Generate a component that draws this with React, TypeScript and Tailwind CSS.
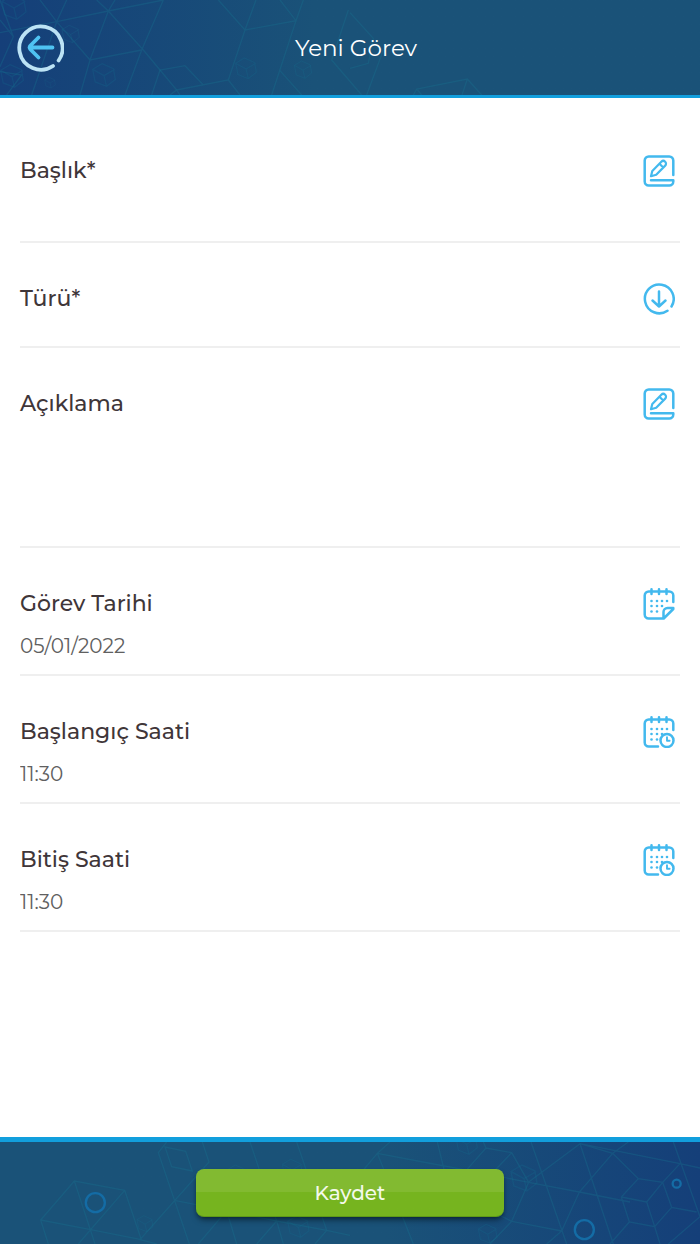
import { useState, type ReactNode } from "react";

const ink = {
  fill: "none",
  stroke: "currentColor",
  strokeWidth: 2.5,
  strokeLinecap: "round",
  strokeLinejoin: "round",
} as const;

function EditIcon() {
  return (
    <svg viewBox="0 0 32 32" className="size-8" aria-hidden="true" {...ink}>
      <path d="M30.300 20V5.500a4 4 0 0 0-4-4H5.700a4 4 0 0 0-4 4v21a4 4 0 0 0 4 4h20.600a4 4 0 0 0 4-4v-1.300H8" />
      <path d="m8 21.200 1.300-5.300 9-9.200a2.700 2.700 0 0 1 3.900 3.900l-9 9.200L8 21.200ZM16.500 8.800l3.700 3.700" strokeWidth="2.200" />
    </svg>
  );
}

function DownIcon() {
  return (
    <svg viewBox="0 0 32 32" className="size-8" aria-hidden="true" {...ink}>
      <path d="M28.500 23.500A14.400 14.400 0 1 0 24.500 27.700" />
      <path d="M16 8.500v15M9.500 17.500l6.500 6 6.500-6" />
    </svg>
  );
}

const dots: [number, number][] = [
  [8.5, 13], [14, 13], [19, 13], [24, 13],
  [8.5, 18], [14, 18], [19, 18],
  [8.5, 23.5], [14, 23.5],
];

function CalendarIcon({ clock = false }: { clock?: boolean }) {
  return (
    <svg viewBox="0 0 32 32" className="size-8" aria-hidden="true" {...ink}>
      <path d="M8.500 1.300v4.700M16 1.300v4.700M23.500 1.300v4.700" />
      {clock ? (
        <>
          <path d="M30.300 14V7.500a4 4 0 0 0-4-4H5.700a4 4 0 0 0-4 4v19a4 4 0 0 0 4 4H15" />
          <circle cx="24" cy="24.500" r="6.500" />
          <path d="M24 21.300v3.500h2.600" strokeWidth="1.900" />
        </>
      ) : (
        <path d="M30.300 14V7.500a4 4 0 0 0-4-4H5.700a4 4 0 0 0-4 4v19a4 4 0 0 0 4 4h15l9.600-9.500V20h-5.800a4 4 0 0 0-4 4v6.500" />
      )}
      <g fill="currentColor" stroke="none">
        {dots.map(([x, y]) => (
          <circle key={`${x}-${y}`} cx={x} cy={y} r="1.300" />
        ))}
      </g>
    </svg>
  );
}

function BackIcon() {
  return (
    <svg viewBox="0 0 48 48" className="size-12" aria-hidden="true" fill="none" strokeLinecap="round" strokeLinejoin="round">
      <path d="M42.600 36.500A21.600 21.600 0 1 0 37 42" stroke="#bce3f5" strokeWidth="3.800" />
      <path d="M36.500 23.500H13.500M22.500 13.500 14.500 21.500Q12.800 23.500 14.500 25.500L22.500 33.500" stroke="#4fc3f2" strokeWidth="3.800" />
    </svg>
  );
}

function Cube({ x, y, r }: { x: number; y: number; r: number }) {
  return (
    <path
      opacity="0.7"
      transform={`translate(${x} ${y}) scale(${r / 36})`}
      d="M-6-36 30-20 36 14 8 36-28 22-36-18ZM0 2-36-18M0 2 34-18M0 2 8 36"
    />
  );
}

function HeaderPattern() {
  return (
    <svg viewBox="0 0 2100 285" className="absolute bottom-0 left-0 w-175" aria-hidden="true" fill="none" stroke="#167191" strokeWidth="4" strokeOpacity="0.34">
      <path d="M0 98 170 65 325 33 490 0M120 0 170 65 270 180 425 150M200 0 170 65 95 285M290 0 325 33 430 150 530 270M345 0 325 33 270 180 240 285M490 0 425 150 375 285M0 60 40 110 0 200M0 215 65 225 20 285M40 110 0 0" />
      <path d="M455 285 480 210 555 197 610 255M655 0 735 90 888 62 840 0M768 0 735 90 685 240 530 270 510 285M530 270 540 285M910 0 888 62 815 285M685 240 720 285M840 212 905 285" />
      <path d="M1045 30 995 180 1085 285M1050 38 1120 115 1105 190 1050 205M1150 150 1100 285M1240 285 1250 267 1402 237 1445 285M1402 237 1386 285M1250 267 1265 285" />
      <Cube x={42} y={22} r={36} />
      <Cube x={212} y={102} r={26} />
      <Cube x={312} y={225} r={34} />
      <Cube x={36} y={228} r={34} />
      <Cube x={150} y={248} r={16} />
      <Cube x={738} y={205} r={31} />
      <Cube x={909} y={209} r={26} />
    </svg>
  );
}

function FooterPattern() {
  return (
    <svg viewBox="0 0 2100 306" className="absolute top-0 right-0 w-175" aria-hidden="true" fill="none">
      <g stroke="#167191" strokeWidth="4" strokeOpacity="0.34">
        <path d="M145 306 122 234 223 117 374 145 424 293 272 263 122 234M223 117 285 306M424 293 272 263 374 145M272 263 235 306M500 0 475 32 568 306M607 0 627 60 420 293 470 306M495 15 557 28 577 87 515 74ZM527 176 680 206 830 237 980 265 1050 280M750 0 830 237 770 306M890 0 980 265 945 306M680 206 595 306M680 206 710 306M830 237 850 306" />
        <path d="M1170 0 1132 34 1285 63 1440 92 1586 121 1738 150 1890 180M1132 34 1240 306M1312 0 1345 135M1132 34 1090 84M1390 95 1458 18 1535 32 1586 121 1535 238 1685 267 1640 306M1535 32 1480 90M1450 0 1458 18M1593 0 1700 306M1585 121 1740 5 1838 34 1738 150 1685 267M1740 5 2040 65 2100 78M1740 5 1840 306M1885 0 1838 34 1915 110 1988 121 2015 196 2090 210M2020 0 2100 224 2005 306M2040 65 1988 121 1940 180 1964 254 1888 240 1864 165 1915 110M1940 180 1864 165M1964 254 2015 196M1964 254 1980 306M1888 240 1830 306M1535 238 1470 306M1535 238 1480 210" />
        <Cube x={435} y={245} r={24} />
        <Cube x={710} y={94} r={25} />
        <Cube x={877} y={82} r={30} />
        <Cube x={895} y={254} r={32} />
        <Cube x={1400} y={5} r={32} />
        <Cube x={1572} y={108} r={39} />
        <Cube x={1463} y={275} r={28} />
      </g>
      <g stroke="#146ca5" strokeWidth="7">
        <circle cx="286" cy="182" r="28.500" />
        <circle cx="1753" cy="263" r="28.500" />
        <circle cx="2030" cy="125" r="12" />
      </g>
    </svg>
  );
}

type FieldProps = {
  id: string;
  label: string;
  icon: ReactNode;
  inline?: ReactNode;
  children?: ReactNode;
};

function Field({ id, label, icon, inline, children }: FieldProps) {
  return (
    <div className="border-b-2 border-[#efefef] pt-10 pb-3">
      <div className="flex h-8 items-center gap-4 pr-[5px]">
        <label htmlFor={id} className="text-[22px] leading-8 font-medium text-[#3f3639]">
          {label}
        </label>
        <div className="flex-1">{inline}</div>
        <button type="button" aria-label={label} className="text-[#43b9ee]">
          {icon}
        </button>
      </div>
      {children}
    </div>
  );
}

const valueClass =
  "mt-2.5 block h-8 w-full bg-transparent text-[20px] leading-8 text-[#606060] outline-none";

export default function App() {
  const [date, setDate] = useState("05/01/2022");
  const [start, setStart] = useState("11:30");
  const [end, setEnd] = useState("11:30");

  return (
    <div className="flex min-h-screen flex-col bg-white font-['Montserrat','Inter',sans-serif]">
      <header className="relative grid h-[98px] grid-cols-[1fr_auto_1fr] items-center overflow-hidden border-b-3 border-[#129fdd] bg-linear-to-r from-[#153f79] to-[#1a5278] to-45% pr-1 pl-4">
        <HeaderPattern />
        <button type="button" aria-label="Geri" className="relative justify-self-start">
          <BackIcon />
        </button>
        <h1 className="relative text-[23px] leading-8 text-white">Yeni Görev</h1>
      </header>

      <form className="flex flex-1 flex-col" onSubmit={(e) => e.preventDefault()}>
        <main className="flex-1 px-5 pt-[17px]">
          <Field id="title" label="Başlık*" icon={<EditIcon />}>
            <input id="title" type="text" className={valueClass} />
          </Field>
          <Field
            id="kind"
            label="Türü*"
            icon={<DownIcon />}
            inline={
              <select id="kind" className="block h-8 w-full appearance-none bg-transparent text-[20px] text-[#606060] outline-none">
                <option value=""></option>
              </select>
            }
          >
            <div className="h-[19px]" />
          </Field>
          <Field id="description" label="Açıklama" icon={<EditIcon />}>
            <textarea id="description" className="mt-2.5 block h-26 w-full resize-none bg-transparent text-[20px] leading-8 text-[#606060] outline-none" />
          </Field>
          <Field id="date" label="Görev Tarihi" icon={<CalendarIcon />}>
            <input id="date" type="text" value={date} onChange={(e) => setDate(e.target.value)} className={valueClass} />
          </Field>
          <Field id="start" label="Başlangıç Saati" icon={<CalendarIcon clock />}>
            <input id="start" type="text" value={start} onChange={(e) => setStart(e.target.value)} className={valueClass} />
          </Field>
          <Field id="end" label="Bitiş Saati" icon={<CalendarIcon clock />}>
            <input id="end" type="text" value={end} onChange={(e) => setEnd(e.target.value)} className={valueClass} />
          </Field>
        </main>

        <footer className="relative flex h-[107px] items-center justify-center overflow-hidden border-t-5 border-[#129fdd] bg-linear-to-r from-[#1a5278] from-55% to-[#153f79]">
          <FooterPattern />
          <button
            type="submit"
            className="relative h-12 w-[44%] rounded-lg border-b border-[#5f9a17] bg-linear-to-b from-[#82ba31] from-50% to-[#76b41f] to-50% text-[20px] font-medium text-[#f4f9ea] shadow-md shadow-black/40"
          >
            Kaydet
          </button>
        </footer>
      </form>
    </div>
  );
}
